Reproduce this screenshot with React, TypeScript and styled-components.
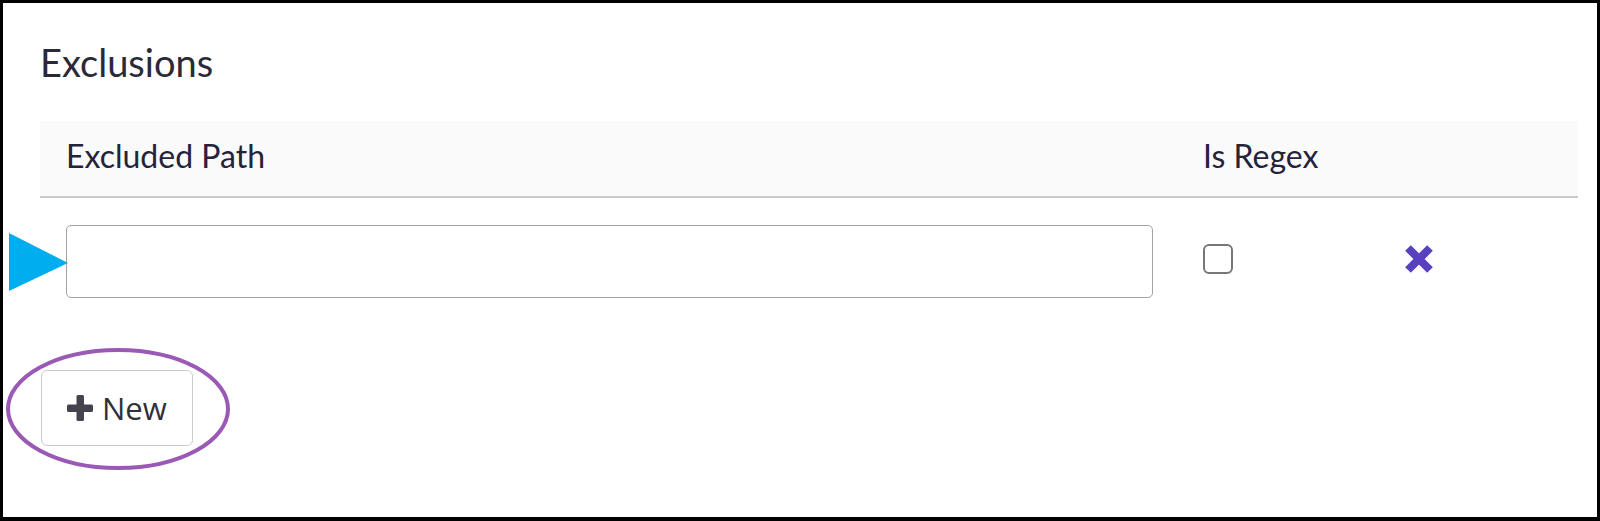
import styled, { createGlobalStyle } from "styled-components";

const GlobalStyle = createGlobalStyle`
  html, body {
    margin: 0;
    padding: 0;
    background: #ffffff;
  }
  * {
    box-sizing: border-box;
  }
`;

const Frame = styled.div`
  position: relative;
  width: 1600px;
  height: 521px;
  border-style: solid;
  border-color: #000;
  border-width: 3px 3px 4px 3px;
  background: #fff;
  padding: 38px 19px 0 37px;
  font-family: "Lato", "Liberation Sans", sans-serif;
  color: #2a2938;
`;

const Heading = styled.h2`
  margin: 0 0 37px 0;
  font-size: 38px;
  line-height: 43px;
  font-weight: 400;
  color: #2a2938;
`;

const Row = styled.div<{ $head?: boolean }>`
  display: grid;
  grid-template-columns: 1087px 153px 1fr;
  column-gap: 50px;
  align-items: center;
  padding-left: 26px;
  ${(p) =>
    p.$head
      ? `
    height: 77px;
    padding-bottom: 6px;
    background: #fafafa;
    border-bottom: 2px solid #c9cacd;
  `
      : `
    padding-top: 27px;
  `}
`;

const HeadCell = styled.div`
  font-size: 32px;
  line-height: 36px;
  color: #24233a;
`;

const PathInput = styled.input`
  width: 100%;
  height: 73px;
  border: 1.5px solid #a2a2a2;
  border-radius: 5px;
  padding: 0 14px;
  font-size: 24px;
  background: #fff;
  outline: none;
`;

const CheckBox = styled.span`
  display: block;
  width: 30px;
  height: 30px;
  margin-bottom: 6px;
  border: 2px solid #777779;
  border-radius: 6px;
  background: #fff;
`;

const RemoveButton = styled.button`
  display: flex;
  align-items: center;
  justify-content: flex-start;
  width: 30px;
  height: 30px;
  margin-bottom: 6px;
  margin-left: -2px;
  padding: 0;
  border: 0;
  background: transparent;
  cursor: pointer;
`;

const NewButton = styled.button`
  display: flex;
  align-items: center;
  gap: 9px;
  width: 152px;
  height: 76px;
  margin: 72px 0 0 1px;
  padding: 0 0 0 25px;
  border: 1.5px solid #cccccc;
  border-radius: 6px;
  background: #fff;
  font-family: "Open Sans", "Liberation Sans", sans-serif;
  font-size: 31px;
  font-weight: 400;
  color: #2f2f3d;
  cursor: pointer;
`;

const Pointer = styled.svg`
  position: absolute;
  left: 6px;
  top: 228px;
`;

const Ring = styled.svg`
  position: absolute;
  left: -1px;
  top: 342px;
  pointer-events: none;
`;

const TimesIcon = () => (
  <svg width="30" height="28" viewBox="0 0 30 28">
    <path
      d="M4 3 L26 25 M26 3 L4 25"
      stroke="#5940bd"
      strokeWidth="8"
      strokeLinecap="butt"
      fill="none"
    />
  </svg>
);

const PlusIcon = () => (
  <svg width="26" height="26" viewBox="0 0 26 26">
    <rect x="9.5" y="0" width="7.5" height="26" rx="1.5" fill="#45434f" />
    <rect x="0" y="9.5" width="26" height="7.5" rx="1.5" fill="#45434f" />
  </svg>
);

export default function App() {
  return (
    <>
      <GlobalStyle />
      <Frame>
        <Heading>Exclusions</Heading>
        <Row $head>
          <HeadCell>Excluded Path</HeadCell>
          <HeadCell>Is Regex</HeadCell>
          <div />
        </Row>
        <Row>
          <PathInput type="text" />
          <CheckBox />
          <RemoveButton aria-label="Remove">
            <TimesIcon />
          </RemoveButton>
        </Row>
        <NewButton>
          <PlusIcon />
          New
        </NewButton>

        <Pointer width="60" height="60" viewBox="0 0 60 60">
          <polygon points="0,2 59,32 0,60" fill="#00aeef" />
        </Pointer>
        <Ring width="232" height="128" viewBox="0 0 232 128">
          <ellipse
            cx="116"
            cy="64"
            rx="110"
            ry="59"
            fill="none"
            stroke="#9b59b6"
            strokeWidth="4"
          />
        </Ring>
      </Frame>
    </>
  );
}
